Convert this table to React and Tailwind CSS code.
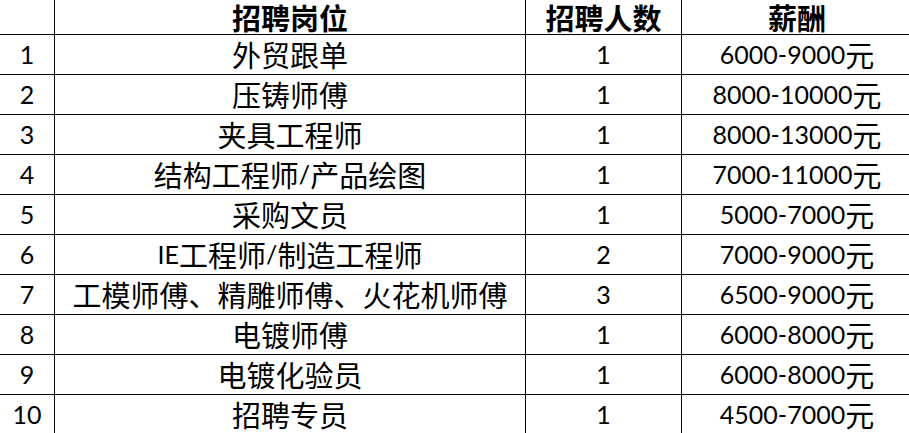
const rows = [
  ["1", "外贸跟单", "1", "6000-9000元"],
  ["2", "压铸师傅", "1", "8000-10000元"],
  ["3", "夹具工程师", "1", "8000-13000元"],
  ["4", "结构工程师/产品绘图", "1", "7000-11000元"],
  ["5", "采购文员", "1", "5000-7000元"],
  ["6", "IE工程师/制造工程师", "2", "7000-9000元"],
  ["7", "工模师傅、精雕师傅、火花机师傅", "3", "6500-9000元"],
  ["8", "电镀师傅", "1", "6000-8000元"],
  ["9", "电镀化验员", "1", "6000-8000元"],
  ["10", "招聘专员", "1", "4500-7000元"],
];

// CJK en latin krijgen elk hun eigen maat, zoals in de spreadsheet
const Txt = ({ s }) =>
  s.split(/([\u3000-\u303f\u4e00-\u9fff]+)/).map((part, i) =>
    part === "" ? null : /[\u3000-\u303f\u4e00-\u9fff]/.test(part) ? (
      <span key={i} className="text-[29px]">
        {part}
      </span>
    ) : (
      <span key={i} className="font-['Lato'] text-[25px]">
        {part}
      </span>
    )
  );

const cols = "grid grid-cols-[55px_471px_156px_231px] border-b border-black";
const cell = "flex items-center justify-center border-r border-black leading-none whitespace-nowrap";

export default function App() {
  return (
    <div className="w-[909px] h-[433px] overflow-hidden bg-white text-black font-['Noto_Sans_CJK_SC',sans-serif]">
      <div className="w-[913px]">
        <div className={`${cols} h-[35px] font-bold`}>
          <div className={cell}></div>
          <div className={cell}>
            <Txt s="招聘岗位" />
          </div>
          <div className={cell}>
            <Txt s="招聘人数" />
          </div>
          <div className={cell}>
            <Txt s="薪酬" />
          </div>
        </div>
        {rows.map(([n, job, count, pay]) => (
          <div key={n} className={`${cols} h-[40px]`}>
            <div className={cell}>
              <Txt s={n} />
            </div>
            <div className={cell}>
              <Txt s={job} />
            </div>
            <div className={cell}>
              <Txt s={count} />
            </div>
            <div className={cell}>
              <Txt s={pay} />
            </div>
          </div>
        ))}
      </div>
    </div>
  );
}
